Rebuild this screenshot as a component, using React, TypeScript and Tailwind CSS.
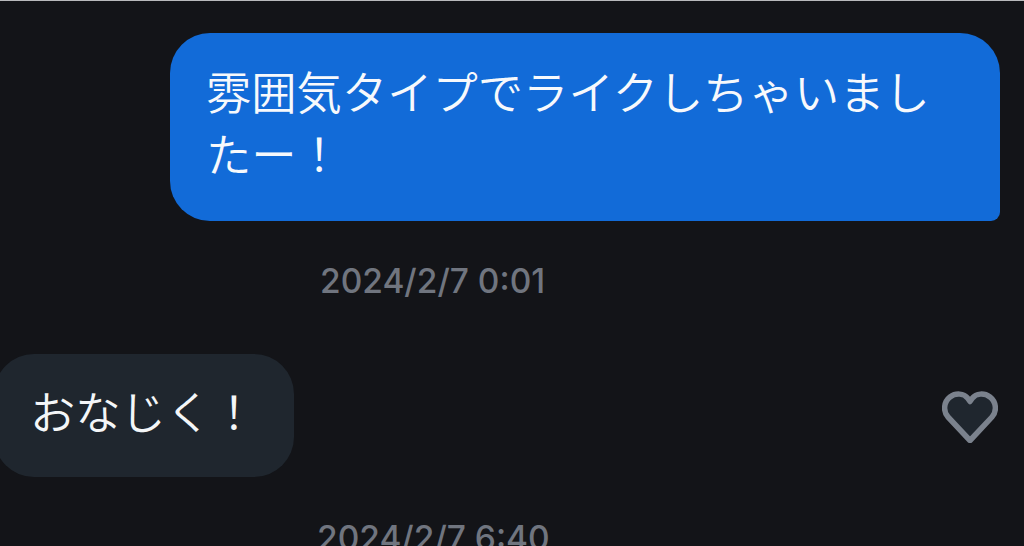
const cjk = "font-['Noto_Sans_CJK_JP','Noto_Sans_CJK_SC',sans-serif]";

const Heart = () => (
  <svg width="56" height="52" viewBox="0 0 56 52" className="mr-[26px] mt-[37px] shrink-0">
    <path
      d="M28 49.5 L6 26 C1 20.5 1.5 11 8 6 C14 1.5 22 2.5 25.5 7 L28 10.5 L30.5 7 C34 2.5 42 1.5 48 6 C54.5 11 55 20.5 50 26 Z"
      fill="#1f262e"
      stroke="#7b828d"
      strokeWidth="5.5"
      strokeLinejoin="round"
    />
  </svg>
);

export default function App() {
  return (
    <div className="h-[546px] w-[1024px] overflow-hidden border-t border-t-[#b9babc] bg-[#131418]">
      <div className="flex justify-end pt-8 pr-6">
        <div
          className={`h-[188px] w-[830px] rounded-[40px] rounded-br-[9px] bg-[#126bd8] pt-[26px] pl-[36px] text-[45.3px] leading-[62px] text-[#f7f9fc] ${cjk}`}
        >
          <p className="w-[740px] font-[350]">雰囲気タイプでライクしちゃいましたー！</p>
        </div>
      </div>
      <p className="mt-[38px] ml-[320px] font-['Inter',sans-serif] text-[33.5px] font-medium leading-[44px] text-[#70757f]">
        2024/2/7 0:01
      </p>
      <div className="mt-[51px] flex items-start justify-between">
        <div
          className={`-ml-[6px] h-[123px] w-[300px] rounded-[40px] bg-[#1f262e] pt-[25px] pl-[36px] text-[45.3px] leading-[62px] text-[#f4f6f8] ${cjk}`}
        >
          <p className="font-[350]">おなじく！</p>
        </div>
        <Heart />
      </div>
      <p className="mt-[39px] ml-[317px] font-['Inter',sans-serif] text-[33.5px] font-medium leading-[44px] text-[#70757f]">
        2024/2/7 6:40
      </p>
    </div>
  );
}
